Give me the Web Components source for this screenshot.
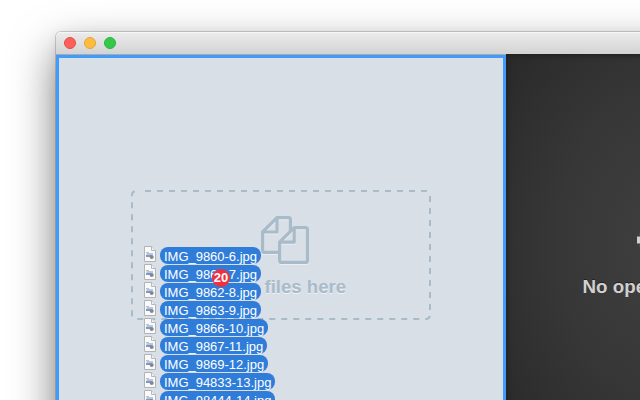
<!DOCTYPE html>
<html lang="en"><head><meta charset="utf-8"><title>Files</title>
<style>html,body{margin:0;width:640px;height:400px;overflow:hidden;background:#fff}</style></head>
<body><app-desktop></app-desktop>
<script>
const define = (name, html) => {
  const t = document.createElement('template');
  t.innerHTML = html;
  customElements.define(name, class extends HTMLElement {
    constructor() { super(); this.attachShadow({mode: 'open'}).append(t.content.cloneNode(true)); }
  });
};

define('traffic-lights', `<style>
:host{display:flex;gap:8px;padding-bottom:1px}
i{width:12px;height:12px;border-radius:50%;box-sizing:border-box;border:1px solid #e94b47;background:#fc605b}
i:nth-of-type(2){border-color:#e3a53a;background:#fdbc40}
i:nth-of-type(3){border-color:#2ab53c;background:#34c84a}
</style><i></i><i></i><i></i>`);

define('title-bar', `<style>
:host{display:flex;align-items:center;height:23px;padding:0 8px;box-sizing:border-box;background:linear-gradient(#ebebeb,#d3d3d3);border-radius:5px 0 0 0;border-top:1px solid #f6f6f6;border-bottom:1px solid #aaa}
</style><slot></slot>`);

define('drop-zone', `<style>
:host{display:grid;width:300px;height:130px;color:#a9bbc9;font:bold 18.6px/22px "Liberation Sans",Arial,sans-serif}
svg,.c{grid-area:1/1}
.c{display:flex;flex-direction:column;align-items:center;padding-top:25px;gap:11px;text-shadow:0 1px 0 #edf1f5}
.icon{margin-left:8px;filter:drop-shadow(0 1px 0 #e9eef3)}
</style>
<svg width="300" height="130" fill="none" stroke="#a9bbc9" stroke-width="2"><path stroke-dasharray="6 6" d="M14 1H295A4 4 0 0 1 299 5V125A4 4 0 0 1 295 129H5A4 4 0 0 1 1 125V5A4 4 0 0 1 5 1H8"/></svg>
<div class="c"><svg class="icon" width="50" height="50" viewBox="0 0 50 50" fill="none" stroke="#a9bbc9" stroke-width="3.2" stroke-linejoin="round"><path d="M19 37.4H4.6Q2.6 37.4 2.6 35.4V17L17 2.6H28.4Q30.4 2.6 30.4 4.6V16M17 2.6V17H2.6"/><path d="M19.6 27.2L34.2 12.6H45.4Q47.4 12.6 47.4 14.6V45.4Q47.4 47.4 45.4 47.4H21.6Q19.6 47.4 19.6 45.4ZM34.2 12.6V27.2H19.6"/></svg>
<span><slot></slot></span></div>`);

define('source-pane', `<style>
:host{display:flex;justify-content:center;box-sizing:border-box;width:450px;height:520px;padding:132px 0 0;border:3px solid #3f9bfd;background:#d8dfe7}
</style><slot></slot>`);

define('preview-pane', `<style>
:host{display:flex;flex-direction:column;align-items:center;box-sizing:border-box;width:286px;height:520px;margin-top:-1px;padding-top:162px;gap:12px;color:#d0d0d0;background:radial-gradient(ellipse 240px 300px at 60% 190px,#404040,#373737 50%,#282828 100%);box-shadow:inset 1px 1px 5px #1e1e1e;font:bold 18.8px/22px "Liberation Sans",Arial,sans-serif}
span{white-space:nowrap;text-shadow:0 -1px 0 #222;margin-right:15px}
svg{display:block;margin-left:23px}
</style><svg width="48" height="48" viewBox="-24 -24 48 48" fill="none" stroke="#d0d0d0"><circle r="14" stroke-width="7"/><path d="M-24 0H-15M24 0H15M0-24V-15M0 24V15M-20-9L-13-6M20-9L13-6M-20 9L-13 6M20 9L13 6" stroke-width="7"/></svg><span><slot></slot></span>`);

define('app-window', `<style>
:host{display:block;width:736px;border-radius:5px 0 0 0;box-shadow:0 0 0 1px #0000002b,0 18px 44px #00000088,0 2px 12px #00000010}
main{display:flex;align-items:flex-start}
</style><slot name="title"></slot><main><slot></slot></main>`);

define('file-row', `<style>
:host{display:flex;gap:4px;height:18px;align-items:flex-start;font:13px/20px "Liberation Sans",Arial,sans-serif;color:#fff}
svg{flex:none;display:block;margin-top:-1px}
span{height:17px;padding:0 4px;border-radius:8px;background:#2f7dd9;white-space:nowrap;letter-spacing:-.02px}
</style><svg width="12" height="16"><path d="M.5 .5H7.5L11.5 4.5V15.5H.5Z" fill="#fafafa" stroke="#b0b3b7"/><path d="M7.5 .5V4.5H11.5" fill="#eee" stroke="#a5aab0" stroke-width=".8"/><path d="M2 6.5H5" stroke="#d5bd97"/><path d="M2.5 8H9" stroke="#a9c9f3" stroke-width="2"/><path d="M2 10H7" stroke="#5679b4" stroke-width="1.5"/><circle cx="7.7" cy="11" r="2" fill="#85858b"/></svg><span><slot></slot></span>`);

define('drag-badge', `<style>
:host{position:absolute;left:68px;top:22px;width:18px;height:18px;border-radius:9px;background:#f2303d;color:#fff;font:bold 13px/18px "Liberation Sans",Arial,sans-serif;text-align:center}
</style><slot></slot>`);

define('drag-stack', `<style>
:host{position:absolute;left:144px;top:247px;display:flex;flex-direction:column}
</style><slot></slot>`);

define('app-desktop', `<style>
:host{display:block;position:relative;width:640px;height:400px;overflow:hidden;background:#fff}
app-window{margin:32px 0 0 56px}
</style>
<app-window><title-bar slot="title"><traffic-lights></traffic-lights></title-bar>
<source-pane><drop-zone>Drop files here</drop-zone></source-pane><preview-pane>No open files</preview-pane></app-window>
<drag-stack><file-row>IMG_9860-6.jpg</file-row><file-row>IMG_9861-7.jpg</file-row><file-row>IMG_9862-8.jpg</file-row><file-row>IMG_9863-9.jpg</file-row><file-row>IMG_9866-10.jpg</file-row><file-row>IMG_9867-11.jpg</file-row><file-row>IMG_9869-12.jpg</file-row><file-row>IMG_94833-13.jpg</file-row><file-row>IMG_98444-14.jpg</file-row><drag-badge>20</drag-badge></drag-stack>`);
</script></body></html>
